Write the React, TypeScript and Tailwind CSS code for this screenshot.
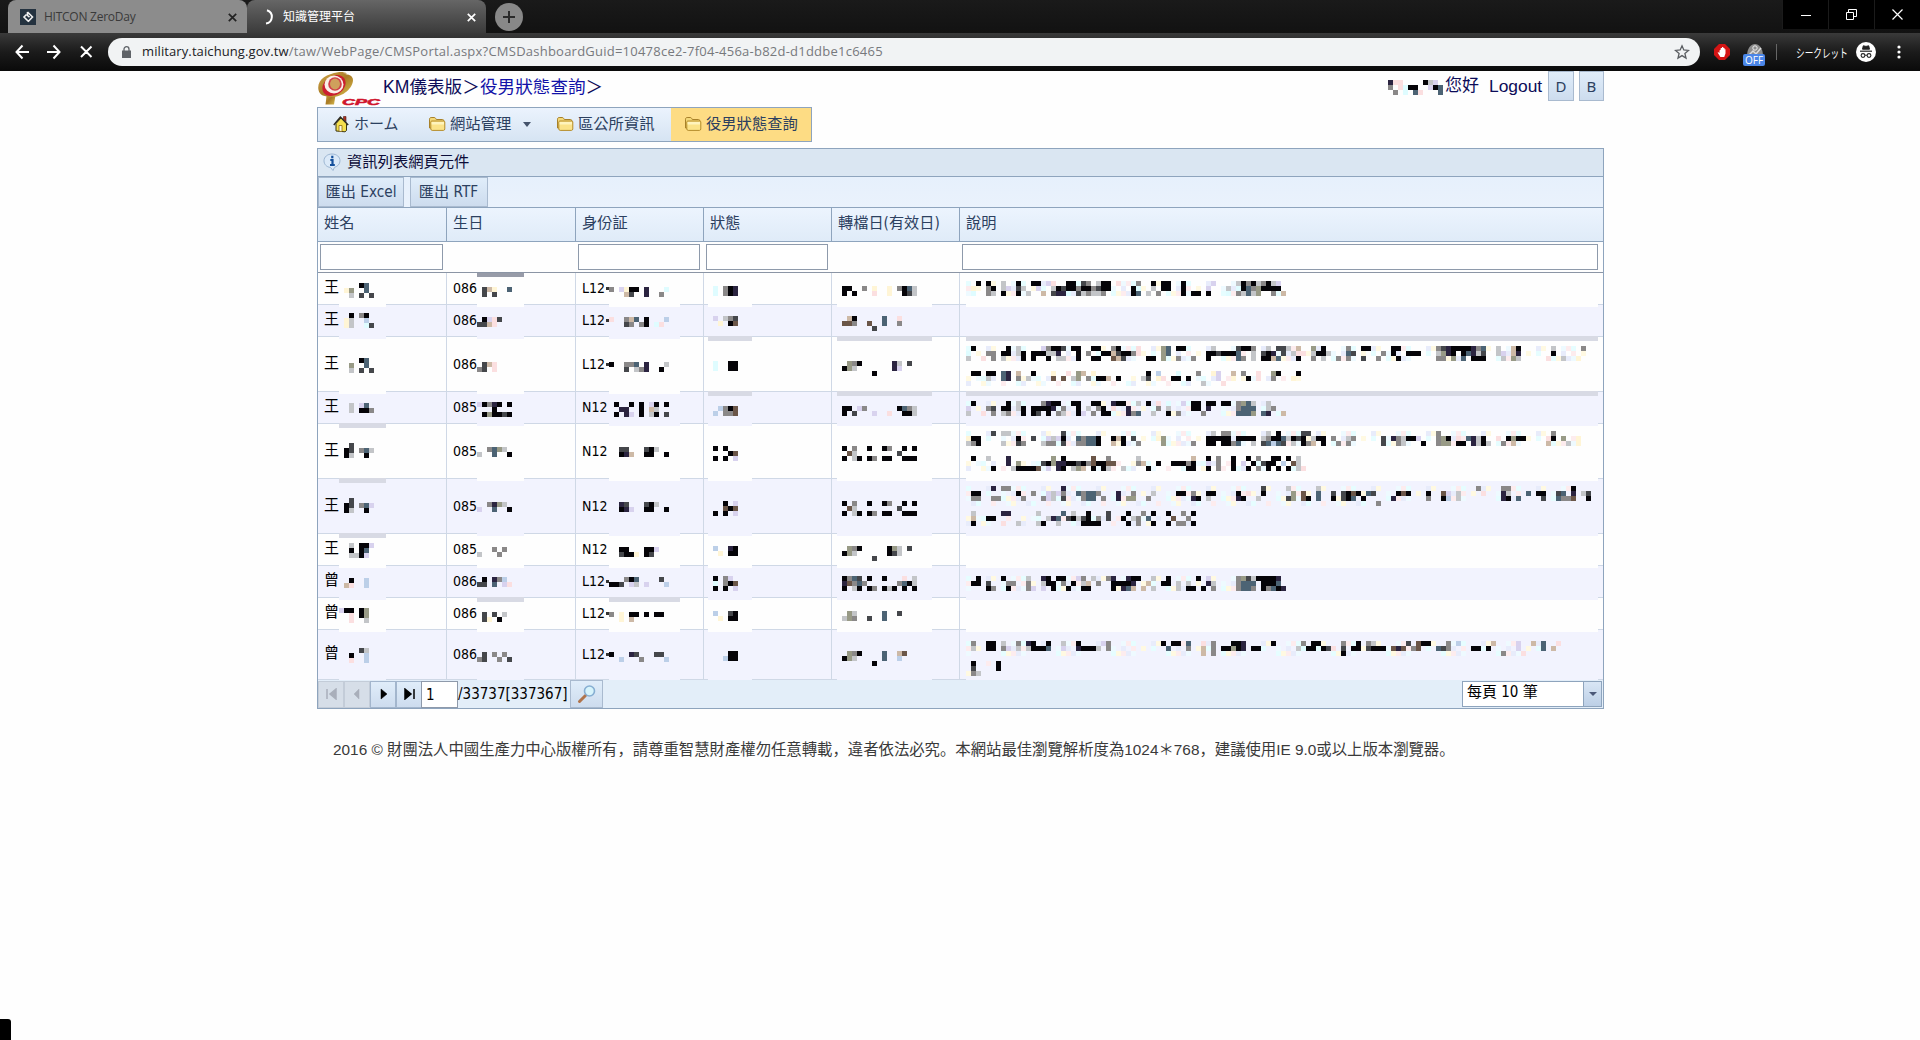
import type { ReactNode } from "react";
import clsx from "clsx";

const PALETTE: Record<string, string> = {
  k: "#050408",
  d: "#45474b",
  g: "#8a8888",
  s: "#c3c5c8",
  b: "#4c6374",
  n: "#2b2440",
  t: "#cdb9a6",
  r: "#6b5648",
  G: "#989a86",
  w: "#bccfe8",
  c: "#dffcff",
  y: "#fff5d6",
  p: "#fbdfe0",
  l: "#d8d2ee",
};

const TINTS = ["#e6fdff", "#fff9e2", "#fdecee", "#e8ecfb", "#eefaff"];

// Faint colour noise for the blank blocks between letters
function tint(x: number, y: number) {
  const n = (x * 31 + y * 57 + x * y * 7) % 11;
  return n < TINTS.length ? TINTS[n] : undefined;
}

// Censored text: every character is one 5px block
function Mosaic({ rows, className, noise }: { rows: string[]; className?: string; noise?: boolean }) {
  const width = Math.max(...rows.map((r) => r.length)) * 5;
  const height = rows.length * 5;
  return (
    <svg width={width} height={height} className={className} shapeRendering="crispEdges">
      {rows.flatMap((row, y) =>
        [...row].map((ch, x) => {
          const fill = PALETTE[ch] ?? (noise ? tint(x, y) : undefined);
          return fill ? <rect key={`${x}-${y}`} x={x * 5} y={y * 5} width={5} height={5} fill={fill} /> : null;
        }),
      )}
    </svg>
  );
}

interface Censored {
  top: number;
  rows: string[];
  strip?: boolean;
}

interface Row {
  height: string;
  name: string;
  birth: string;
  id: string;
  cells: [Censored, Censored, Censored, Censored, Censored, Censored];
}

const NONE: Censored = { top: 0, rows: [""] };
const H32 = "h-[32px]";
const H55 = "h-[55px]";
const H50 = "h-[50px]";

const ROWS: Row[] = [
  {
    height: H32,
    name: "王",
    birth: "086",
    id: "L12",
    cells: [
      { top: 10, rows: ["....kb.", ".yG..b.", "..s.d.d"] },
      { top: 14, rows: [".dty..b", ".d.d..."], strip: true },
      { top: 14, rows: ["g.lykk.n...c", "...td..n..g."] },
      { top: 13, rows: [".c.gkn", ".c.gkn"] },
      { top: 13, rows: [".kk..g.y..y.gkbs", ".k.k...p..y..kds"] },
      {
        top: 8,
        rows: [
          "..k.k..s..k..kk.lp..kk.dg.skk.p...g..k.kk..k.....l....skgksgksl.",
          ".y..gk.sl.ds..l..skdkkgkkgdkk....kc..s.kk..k....l...s.ckbgGkkkk.",
          ".c..gs.k..k.s..t.dnnc.dsgssg.....kb.s.g....k.kk.k...c.gsbsG..g.t",
        ],
      },
    ],
  },
  {
    height: H32,
    name: "王",
    birth: "086",
    id: "L12",
    cells: [
      { top: 8, rows: ["..k.gk.", ".ys..w.", ".ys..cd"] },
      { top: 12, rows: [".klpd..", "ddtp..."] },
      { top: 12, rows: ["p..gtb.k...w", "...dg.gk.cp."] },
      { top: 11, rows: [".l.sgd", "..y.kr"] },
      { top: 11, rows: ["..tk.....b..p...", ".rrg..r..b..g...", ".......d........"] },
      NONE,
    ],
  },
  {
    height: H55,
    name: "王",
    birth: "086",
    id: "L12",
    cells: [
      { top: 21, rows: ["....kb.", "..G..b.", "..s.d.d"] },
      { top: 25, rows: [".dtp...", "gd.p..."] },
      { top: 25, rows: ["k..ggb.n...s", "...d.sgn..k."] },
      { top: 24, rows: [".c..kk", ".c..kk"], strip: true },
      { top: 24, rows: ["..Ggk......ns.d.", ".kGs.......nl...", ".......k........"], strip: true },
      {
        top: 9,
        strip: true,
        rows: [
          ".k......k.s....lgkkd.kk..kk..gk...p....Gb.kk.....s....dkkg..s.dds.t..G.k....g..kk....kk.......gdnkkkkngb..s..tk......s.....g",
          "c...gg.kk.sk.kkkssn...k.g..kktdkkgp....Gb.......kkdkkkb..s.dkn.d.spp.skks...bd.....g.k..kkk...sGnk.kbnsd..sl.tn......k......",
          "s..p.g.s...k.k..k.ss..k..kk..rtd....kk.G..g..g..k.....bg.s.kktb...k..g.s..g.g..d..g...k.......gg.G.b.kkk...s.Gs.....p..s..y.",
          "",
          "",
          ".kk.kk.bn.t..k...y..p.Gt.y..........k.w...c...g..yl..t.g..p..Gk...k",
          "....s..bn.g.s....r.r.sG.g.kkt.k....sd.yp.kk.k.....l..y..k.p..g...y.",
          "...............................................s...p",
        ],
      },
    ],
  },
  {
    height: H32,
    name: "王",
    birth: "085",
    id: "N12",
    cells: [
      { top: 11, rows: ["..s.lb.", "..s.kkg"] },
      { top: 10, rows: ["lkgnk.k", "...k...", ".kGkkdk"] },
      { top: 10, rows: [".k..k.k.lk.k", "..nn..k.ts..", ".k.nl.k.sk.d"] },
      { top: 14, rows: ["..wgkr", ".w.ggr"], strip: true },
      { top: 14, rows: [".kk.lg......kbgs", ".k.d...l..p..kks"], strip: true },
      {
        top: 9,
        strip: true,
        rows: [
          ".k......k.s....gnkk..kk..kk..nkk..s.k.p.c..l.kk.kk.kk.gGbs..s.",
          "l...gd.kk.sk.kkkkn.g..k.s.gk.p..n.....g.s....kk.n.....gbbb..sg",
          "s..p.g.sg..k.kd.k.gs..kl.g.kk...ngb..s..k.g....g......bbbG.bn..t",
        ],
      },
    ],
  },
  {
    height: H55,
    name: "王",
    birth: "085",
    id: "N12",
    cells: [
      { top: 19, rows: ["..d....", ".kd.gbs", ".ks..k."], strip: true },
      { top: 23, rows: ["..gbGs.", "s..b..k"] },
      { top: 23, rows: ["..dd...dks..", "..knt..kk..k"] },
      { top: 22, rows: [".k.k..", "....kr", ".k.k.l"] },
      { top: 22, rows: [".k.g..k..kg..k.k", "..rs........d...", ".k.sk.kg.kk..kkk"] },
      {
        top: 7,
        rows: [
          ".....d.ss..........d.............................s.gg.......s.k....dd.........................g......................g",
          "ykk.......k..d..lslk..bgbbk..ktk.d....yG........kkkkk.kkkk.sgkkbskdk.skk.g..sg.....d.ngskkl...gGk.p.bnsk..p.kGkk....pk.G..y",
          "sgk....s..dg...sgg.d..ggbbk..t.k..g....G.....g..kk.kkgb..s.dbwbd.s.kgt.k..g.g......d..gs...k..gGG.kk.nsks..g.t......t...s.y",
          "",
          "",
          ".k..s...n........G.k.....r..g.....s..........t..k.g..k..k.g..kk.k.s",
          "........n.G....dkGnnkkdkgrkkrr....gt..k..kkkgk..l.g..k.l.k.dkk.w.rs",
          ".....k...skkkkr.l.nk.sGt.k.ks..s....k.......kk..k.g..k..k.g.k.k.k.sp",
        ],
      },
    ],
  },
  {
    height: H55,
    name: "王",
    birth: "085",
    id: "N12",
    cells: [
      { top: 19, rows: ["..d....", ".kd.gbl", ".ks..k."], strip: true },
      { top: 23, rows: ["..gnGs.", "l..b..k"] },
      { top: 23, rows: ["..nd...dks..", "..knl..kk..k"] },
      { top: 22, rows: ["...k.l", "...rkr", ".k.k.l"] },
      { top: 22, rows: [".k.g..k..kg..k.k", "..rs........d...", ".k.sk.kg.kk..kkk"] },
      {
        top: 7,
        rows: [
          ".....n.gg..........n.......................................d....s.....s...............................g....gg............k",
          ".kk.......k..g..lslg..bgbbg...n..g...s....kk.g..kk....k.p..k.....G.r..b..d.dkrk.bd....krk...k..rl.s....p...ns...b.kk..db.n.sd",
          ".gg..gg....g...gls.d...gbb.g..n.GG..g........nk.s.....nk..s.....dG.rk.b..k.dkb.k.....n......g..kw.s........nk.b....d..bggr..k",
          "..................................................................................g",
          "",
          ".s.....nn.....s....b.s..k...d...k..g.k..k..g.k",
          ".t..kk..........snb.dksdk.g.d..k.sg.b....r..g.",
          ".k.....p..s...sk..s....kkkk.....k.g..k..k.gg.k",
        ],
      },
    ],
  },
  {
    height: H32,
    name: "王",
    birth: "085",
    id: "N12",
    cells: [
      { top: 9, rows: ["..s.kkl", "..k.kb.", "..sskl."], strip: true },
      { top: 13, rows: ["...g.g.", "s...g.."] },
      { top: 13, rows: ["..kk...kkl..", "..dkky.kd..."] },
      { top: 12, rows: [".w..nk", "..y.kk"] },
      { top: 12, rows: ["..Ggk.....kGs.d.", ".kGs......kds...", ".......d........"] },
      NONE,
    ],
  },
  {
    height: H32,
    name: "曾",
    birth: "086",
    id: "L12",
    cells: [
      { top: 12, rows: ["..k..w.", ".tp..w."] },
      { top: 11, rows: [".k.ngw.", "dd.b.lp"] },
      { top: 11, rows: ["...gkb....d.", "kkd.ls.l...w"] },
      { top: 10, rows: [".k.gl.", ".c.gkr", ".k.k.l"] },
      { top: 10, rows: [".kgbd.k..k...p.s", ".nrgbg......gbks", ".k.sk.kg.ksk.k.k"] },
      {
        top: 10,
        rows: [
          "..k....k....s..nk.kk..lg.s..gn..nkk..s..k.....k.l.....gGdskkkkn",
          ".kk.d...gg..g..skk.g.k.st.g..kkkkn..t..kk.s.s...ns....gbbb.kkkb",
          "....kg..k...gl.l.k..k..kk....k.nbt.t.s....s.kk.k.g....gbbg.kgbkn",
        ],
      },
    ],
  },
  {
    height: H32,
    name: "曾",
    birth: "086",
    id: "L12",
    cells: [
      { top: 10, rows: ["lkk.kG.", "..p.kG.", "..p..s."] },
      { top: 14, rows: [".d.d.s.", ".dy.k.."], strip: true },
      { top: 14, rows: ["g.y.kk.k.kk.", "..y.t......."], strip: true },
      { top: 13, rows: [".w..dk", "..y.kk"] },
      { top: 13, rows: ["..Gs.....b..d...", ".sGg..d..b......"] },
      NONE,
    ],
  },
  {
    height: H50,
    name: "曾",
    birth: "086",
    id: "L12",
    cells: [
      { top: 18, rows: ["....ds.", "..k..w.", "..p..w."] },
      { top: 22, rows: [".d.g.g.", "gd..g.d"] },
      { top: 22, rows: ["k...nd...dd.", "..w...g....w"] },
      { top: 21, rows: ["....kk", "...wkk"] },
      { top: 21, rows: ["..Ggk....b..tr..", ".kGs.....b..w...", ".......k........"] },
      {
        top: 11,
        rows: [
          ".g..kk.s..g.nk..k..s..k....lg..........k.kk.b..p.g...kkn.....k.....g.kk....g..k.gs......d.rkk...g.w......t....l..t.b..p",
          ".s..kk.gl.s.skkkb..l..nkkks.g...........b...g..t.g.kkGkn.kk.......sckk.kdp.d.kk.dkkk.rnr.gr...bdg....kk.k.....l....b.t",
          "...............................................t.g.........................k...............................g...p",
          "",
          ".k....k",
          ".d....k",
          ".gs",
        ],
      },
    ],
  },
];

// Blanked area of each column
const PATCHES = [
  "left-[21px] w-[47px]",
  "left-[30px] w-[47px]",
  "left-[33px] w-[71px]",
  "left-[4px] w-[44px]",
  "left-[5px] w-[95px]",
  "left-[6px] right-[5px]",
];

const GRID = "grid grid-cols-[129px_129px_128px_128px_128px_1fr]";

function Patch({ data, index, alt }: { data: Censored; index: number; alt: boolean }) {
  return (
    <div
      className={clsx(
        "absolute top-1 -bottom-[3px] z-10 overflow-hidden",
        PATCHES[index],
        alt ? "bg-[#f2f3fe]" : "bg-[#fefefe]",
      )}
    >
      <div className="relative" style={{ top: data.top - 4 }}>
        <Mosaic rows={data.rows} noise={index === 5} className="block" />
      </div>
    </div>
  );
}

function GridRow({ row, index }: { row: Row; index: number }) {
  const alt = index % 2 === 1;
  const texts = [row.name, row.birth, row.id, "", "", ""];
  return (
    <div className={clsx(GRID, row.height, alt ? "bg-[#f2f3fe]" : "bg-[#fefefe]")}>
      {row.cells.map((cell, i) => (
        <div
          key={i}
          className={clsx(
            "relative flex items-center border-b border-[#cfd8e6] pl-[6px] text-black",
            i < 5 && "border-r",
            i === 0 ? "pb-[2px] text-[15px]" : "text-[14px]",
          )}
        >
          <span className="whitespace-nowrap">{texts[i]}</span>
          {row.id === "L12" && i === 2 && <span className="ml-[1px] h-[3px] w-[3px] bg-[#333]" />}
          <Patch data={cell} index={i} alt={alt} />
          {cell.strip && (
            <div
              className={clsx(
                "absolute z-20",
                index === 0 ? "top-0 h-1 bg-[#979ba8]" : "-top-px h-[5px] bg-[#d8dae4]",
                PATCHES[i],
              )}
            />
          )}
        </div>
      ))}
    </div>
  );
}

function Folder() {
  return (
    <svg width="18" height="16" viewBox="0 0 18 16" className="mb-px shrink-0">
      <path d="M1.500 12V3.200c0-1 .6-1.700 1.600-1.700h3.200c.6 0 1 .3 1.300.8l.7 1.200h6.200c.8 0 1.300.5 1.300 1.300V12z" fill="#f3d878" stroke="#a8812a" />
      <path d="M2.800 6c0-.5.4-1 1-1h12c.6 0 1 .4 1 1v7c0 .8-.6 1.400-1.400 1.400H4.200c-.8 0-1.400-.6-1.400-1.400z" fill="#fbe389" stroke="#b48c2c" />
      <path d="M3.600 6h12.400v2.500H3.600z" fill="#fff4bd" />
    </svg>
  );
}

function House() {
  return (
    <svg width="16" height="18" viewBox="0 0 16 18" className="mb-px shrink-0">
      <path d="M10.500 1.500h2.500v5l-2.500-2.500z" fill="#b03020" stroke="#4a1a10" strokeWidth=".6" />
      <path d="M3 8.500v7.500l9 .8 1.500-1.300V8L8 3z" fill="#f5e04e" stroke="#3a3514" />
      <path d="M.8 10 7.400 2l7.800 8" fill="none" stroke="#2d2a20" strokeWidth="1.500" />
      <path d="M6 10.500h3v6l-3-.2z" fill="#fffbe0" stroke="#8a6a10" strokeWidth=".8" />
    </svg>
  );
}

function Logo() {
  return (
    <svg width="65" height="35" viewBox="0 0 65 35">
      <defs>
        <linearGradient id="gold" x1="0" x2="1" y1="0" y2="1">
          <stop offset="0" stopColor="#d2a84a" />
          <stop offset=".5" stopColor="#a87a24" />
          <stop offset="1" stopColor="#dcc050" />
        </linearGradient>
      </defs>
      <path d="M10 21h9l-2 12.500H8.500z" fill="url(#gold)" />
      <path d="M1.500 19C-.5 9 9 3 21 1.200c4-.4 7 .2 9 1.300l-4 .6c6 0 10 2 10 6C36 17 26 26 16 26 7 26 2.500 24 1.500 19z" fill="url(#gold)" />
      <ellipse cx="17" cy="14.500" rx="12.500" ry="9.500" fill="#cc1f2e" transform="rotate(-35 17 14.500)" />
      <ellipse cx="17" cy="13.500" rx="9.500" ry="9" fill="#faf0e8" />
      <ellipse cx="18" cy="13" rx="6.800" ry="6.800" fill="#d0404a" />
      <ellipse cx="18" cy="13" rx="5" ry="5.400" fill="#cfa05c" />
      <text
        x="25"
        y="33.500"
        textLength="38"
        lengthAdjust="spacingAndGlyphs"
        fontFamily="Liberation Sans"
        fontSize="8.500"
        fontWeight="700"
        fontStyle="italic"
        fill="#d0142c"
        stroke="#d0142c"
        strokeWidth=".5"
      >
        CPC
      </text>
    </svg>
  );
}

function TabClose({ className }: { className: string }) {
  return (
    <svg width="9" height="9" viewBox="0 0 9 9" className={className}>
      <path d="M.8.8l7.400 7.400M8.200.8.8 8.200" stroke="currentColor" strokeWidth="1.700" />
    </svg>
  );
}

function TabStrip() {
  return (
    <div className="flex h-[33px] bg-gradient-to-b from-[#1a1a1a] to-[#121212] pl-2">
      <div className="flex h-full w-[239px] items-center rounded-t-lg bg-[#8c8c8c] pt-px pl-3 text-[#3a3a3a]">
        <svg width="16" height="16" viewBox="0 0 16 16">
          <path d="M0 0h16v16H0z" fill="#24323f" />
          <path d="M7.500 3 12.500 8l-4.500 4.800M7.500 3v3.500l2 1.700M8.500 12.500 4 8l2.500-2.500" fill="none" stroke="#f0f0f0" strokeWidth="1.600" />
        </svg>
        <span className="ml-2 text-[12px] leading-4 tracking-[-0.25px]">HITCON ZeroDay</span>
        <TabClose className="mr-[10px] ml-auto text-[#222]" />
      </div>
      <div className="flex h-full w-[239px] items-center rounded-t-lg bg-gradient-to-b from-[#666] to-[#3b3b3b] pt-px pl-[17px] text-white">
        <svg width="12" height="16" viewBox="0 0 12 16">
          <path d="M3 1.200A6.900 6.900 0 0 1 2 14.600" fill="none" stroke="#fff" strokeWidth="2" />
        </svg>
        <span className="ml-[7px] text-[12px] leading-4">知識管理平台</span>
        <TabClose className="mr-[10px] ml-auto" />
      </div>
      <div className="mt-[3px] ml-[9px] flex h-7 w-7 items-center justify-center rounded-full bg-[#888]">
        <svg width="12" height="12" viewBox="0 0 12 12">
          <path d="M6 0v12M0 6h12" stroke="#2a2a2a" strokeWidth="2" />
        </svg>
      </div>
      <div className="ml-auto flex h-[29px] gap-px bg-[#1b1b1b] pl-px">
        <div className="flex w-[45px] items-center justify-center bg-black">
          <svg width="10" height="10"><path d="M0 5.500h10" stroke="#fff" /></svg>
        </div>
        <div className="flex w-[45px] items-center justify-center bg-black">
          <svg width="11" height="11" fill="none" stroke="#fff">
            <path d="M.5 3.500h7v7h-7zM2.500 3V.5h8v7H8" />
          </svg>
        </div>
        <div className="flex w-[45px] items-center justify-center bg-black">
          <svg width="11" height="11"><path d="M.5.5l10 10M10.500.5l-10 10" stroke="#fff" strokeWidth="1.200" /></svg>
        </div>
      </div>
    </div>
  );
}

function Toolbar() {
  return (
    <div className="flex h-[38px] items-center bg-gradient-to-b from-[#3a3a3a] via-[#1b1b1b] to-[#0a0a0a] pl-[15px] text-white">
      <svg width="78" height="16" viewBox="0 0 78 16" fill="none" stroke="#fff" strokeWidth="2">
        <path d="M14 8H1.500M7.500 1.500 1.500 8l6 6.500M32 8h12.500M38.500 1.500l6 6.500-6 6.500M66 2.500 76.500 13M76.500 2.500 66 13" />
      </svg>
      <div className="ml-[15px] flex h-7 w-[1592px] items-center rounded-full bg-[#f1f3f4] pr-[10px] pl-[14px]">
        <svg width="9" height="12" viewBox="0 0 9 12">
          <path d="M0 4.500h9V12H0z" fill="#5f6368" />
          <path d="M2 5V3.200a2.500 2.500 0 0 1 5 0V5" fill="none" stroke="#5f6368" strokeWidth="1.300" />
        </svg>
        <span className="ml-[11px] text-[13px] tracking-[0.235px] whitespace-nowrap text-[#77797d]">
          <span className="tracking-[0.1px] text-[#202124]">military.taichung.gov.tw</span>
          /taw/WebPage/CMSPortal.aspx?CMSDashboardGuid=10478ce2-7f04-456a-b82d-d1ddbe1c6465
        </span>
        <svg width="16" height="16" viewBox="0 0 16 16" className="ml-auto">
          <path d="M8 1.800 9.800 6l4.700.4-3.600 3.100 1.100 4.600L8 11.600l-4 2.500 1.100-4.600L1.500 6.400 6.200 6z" fill="none" stroke="#5a5d61" strokeWidth="1.300" />
        </svg>
      </div>
      <svg width="16" height="16" viewBox="0 0 16 16" className="ml-[14px]">
        <path d="M5 0h6l5 5v6l-5 5H5l-5-5V5z" fill="#d41414" />
        <path d="M5.500 6.500V9l-1.200-.8c-.6 0-.8.4-.4.9L6.400 13h3.800l1.300-3.500V5.200h-1V4h-1.200V3H8v1H6.700v1.500z" fill="#fff" />
      </svg>
      <div className="relative ml-[13px] h-7 w-[22px]">
        <svg width="16" height="14" viewBox="0 0 16 14" className="mt-[6px] ml-1">
          <path d="M0 12C0 4 4 0 8 0s8 4 8 12z" fill="#8c8c8c" />
          <path d="M2 11 6 7l3 3 5-6" fill="none" stroke="#ddd" strokeWidth="1.500" />
          <circle cx="8" cy="4" r="2.200" fill="none" stroke="#eee" />
        </svg>
        <span className="absolute bottom-0 left-0 h-3 w-[22px] rounded-[2px] bg-[#4a86e8] text-center text-[10px] leading-3">
          OFF
        </span>
      </div>
      <div className="ml-[11px] h-4 w-px bg-[#666]" />
      <span className="ml-[19px] w-[52px] whitespace-nowrap">
        <span className="inline-block origin-left scale-x-[0.72] text-[12px]">シークレット</span>
      </span>
      <svg width="20" height="20" viewBox="0 0 20 20" className="ml-2">
        <circle cx="10" cy="10" r="10" fill="#fff" />
        <path d="M4 9.200h12" stroke="#222" strokeWidth="1.200" />
        <path d="M7.300 3.800 10 4.400l2.700-.6.8 3.400h-7z" fill="#222" stroke="#222" />
        <circle cx="7" cy="13.500" r="1.900" fill="none" stroke="#222" strokeWidth="1.100" />
        <circle cx="13" cy="13.500" r="1.900" fill="none" stroke="#222" strokeWidth="1.100" />
        <path d="M9 13.200h2" stroke="#222" />
      </svg>
      <svg width="4" height="14" viewBox="0 0 4 14" className="ml-[21px]" fill="#fff">
        <circle cx="2" cy="2" r="1.600" />
        <circle cx="2" cy="7" r="1.600" />
        <circle cx="2" cy="12" r="1.600" />
      </svg>
    </div>
  );
}

function Button({ className, children }: { className: string; children?: ReactNode }) {
  return (
    <div
      className={clsx(
        "flex items-center justify-center border border-[#a9bacf] bg-gradient-to-b from-[#e0edfa] to-[#cddcee] whitespace-nowrap text-[#2c4060]",
        className,
      )}
    >
      {children}
    </div>
  );
}

const HEADERS = ["姓名", "生日", "身份証", "狀態", "轉檔日(有效日)", "說明"];

function DataGrid() {
  return (
    <div className="mt-[6px] h-[561px] w-[1287px] border border-[#8ea4bd] text-[15.200px]">
      <div className="flex h-7 items-center border-b border-[#8ea4bd] bg-[#dae6f2] pb-px pl-[5px] text-[#0c0c38]">
        <svg width="18" height="18" viewBox="0 0 18 18">
          <path d="M9 1c4.500 0 8 2.800 8 6.800 0 3.300-2.500 5.800-5.500 6.500L10 17.500l-2.500-3C3.500 14 1 11.300 1 7.800 1 3.800 4.500 1 9 1z" fill="#dbe9f8" stroke="#9db6d2" />
          <path d="M9.300 2.800v2.400M7.300 7h2.200v5M7 12h4.800" fill="none" stroke="#14509c" strokeWidth="2.200" />
        </svg>
        <span className="ml-[6px] text-[15.300px]">資訊列表網頁元件</span>
      </div>
      <div className="flex h-[31px] gap-[6px] border-b border-[#8ea4bd] bg-gradient-to-b from-[#e6f0fc] to-[#eaf2fc]">
        <Button className="h-[30px] w-[86px]">匯出 Excel</Button>
        <Button className="h-[30px] w-[78px] pr-px">匯出 RTF</Button>
      </div>
      <div className={clsx(GRID, "h-[34px] bg-gradient-to-b from-[#ecf4fe] to-[#dfebf8]")}>
        {HEADERS.map((h, i) => (
          <div
            key={h}
            className={clsx(
              "flex items-center border-b border-[#8ea4bd] pb-[2px] pl-[6px] whitespace-nowrap text-[#2c4060]",
              i < 5 && "border-r",
            )}
          >
            {h}
          </div>
        ))}
      </div>
      <div className={clsx(GRID, "h-[31px] border-b border-[#8b95a5] bg-[#fefefe]")}>
        {HEADERS.map((h, i) => (
          <div key={h} className={clsx("pt-[2px] pl-[2px]", i === 5 ? "pr-[5px]" : "pr-[4px]")}>
            {i !== 1 && i !== 4 && <div className="h-[26px] border border-[#8e9aab] bg-white" />}
          </div>
        ))}
      </div>
      {ROWS.map((row, i) => (
        <GridRow key={i} row={row} index={i} />
      ))}
      <div className="relative z-20 flex h-7 items-center bg-[#e3eef9] text-black">
        <Pager disabled d="M1 1v10M10 1 4 6l6 5z" />
        <Pager disabled d="M7 1 2 6l5 5z" />
        <Pager d="M3 1l6 5-6 5z" />
        <Pager d="M1 1l6 5-6 5zM10 1v10" />
        <div className="-ml-px h-[27px] w-[37px] border border-[#8e9aab] bg-white pl-1 text-[15px] leading-[27px]">1</div>
        <span className="w-[112px] text-[15px] whitespace-nowrap">/33737[337367]</span>
        <Button className="h-7 w-[33px]">
          <svg width="20" height="20" viewBox="0 0 20 20">
            <path d="M2.500 17.500l6-6" stroke="#b0744c" strokeWidth="3" strokeLinecap="round" />
            <circle cx="12.500" cy="7" r="5" fill="#d6f3fb" stroke="#86aed2" strokeWidth="1.600" />
          </svg>
        </Button>
        <div className="mr-px ml-auto flex h-[26px] w-[140px] border border-[#8ea4bd] bg-white">
          <span className="flex-1 pl-1 text-[15px] leading-[21px]">每頁 10 筆</span>
          <div className="flex w-[18px] items-center justify-center border-l border-[#8ea4bd] bg-gradient-to-b from-[#d9e6f5] to-[#bccfe6]">
            <svg width="8" height="4"><path d="M0 0h8L4 4z" fill="#4a5878" /></svg>
          </div>
        </div>
      </div>
    </div>
  );
}

function Pager({ d, disabled }: { d: string; disabled?: boolean }) {
  return (
    <div
      className={clsx(
        "flex h-[27px] w-[26px] items-center justify-center border",
        disabled
          ? "border-[#c3ccd8] bg-[#d6dee8] text-[#a9afba]"
          : "border-[#a3b6cd] bg-gradient-to-b from-[#e0edfa] to-[#cddcee] text-black",
      )}
    >
      <svg width="11" height="12" viewBox="0 0 11 12" fill="currentColor" stroke="currentColor">
        <path d={d} strokeWidth={d.includes("v10") ? 1.5 : 0.5} />
      </svg>
    </div>
  );
}

export default function App() {
  return (
    <div className="relative h-[1040px] w-[1920px] overflow-hidden bg-[#fefefe] font-['DejaVu_Sans_Condensed','Noto_Sans_CJK_TC',sans-serif]">
      <div className="font-['Open_Sans','Noto_Sans_CJK_TC',sans-serif]">
        <TabStrip />
        <Toolbar />
      </div>
      <div className="ml-[317px] w-[1287px]">
        <div className="flex h-9 font-['Liberation_Sans','Noto_Sans_CJK_TC',sans-serif] text-[17.600px] text-[#0c0c58]">
          <Logo />
          <div className="ml-px flex h-[32px] items-center whitespace-nowrap">
            <span className="w-[97px]">KM儀表版＞</span>
            <span className="text-[#1212a8]">
              役男狀態查詢<span className="text-[#0c0c58]">＞</span>
            </span>
          </div>
          <div className="ml-auto flex h-[30px]">
            <Mosaic rows={["npp....ksl.", "g.pckk..lkb", ".g.c.bp...b"]} className="mt-[9px] mr-[2px]" />
            <span className="flex w-[44px] items-center pb-px text-[17px]">您好</span>
            <span className="flex w-[59px] items-center text-[17.400px]">Logout</span>
            <Button className="h-[30px] w-[26px] font-['Noto_Sans'] text-[15px]">D</Button>
            <Button className="ml-[5px] h-[30px] w-[25px] font-['Noto_Sans'] text-[15px]">B</Button>
          </div>
        </div>
        <div className="flex h-[35px] w-[495px] border border-[#8ea4bd] bg-gradient-to-b from-[#ebf3fd] to-[#d6e4f3] text-[15.300px] whitespace-nowrap text-[#2c4060]">
          <div className="flex w-[110px] items-center pl-[15px]">
            <House />
            <span className="ml-[5px] text-[15px]">ホーム</span>
          </div>
          <div className="flex w-[128px] items-center">
            <Folder />
            <span className="ml-[4px]">網站管理</span>
            <svg width="8" height="5" className="ml-[12px]"><path d="M0 0h8L4 5z" fill="#44536b" /></svg>
          </div>
          <div className="flex w-[115px] items-center">
            <Folder />
            <span className="ml-[4px]">區公所資訊</span>
          </div>
          <div className="flex flex-1 items-center bg-[#fddc84] pl-[13px]">
            <Folder />
            <span className="ml-[4px]">役男狀態查詢</span>
          </div>
        </div>
        <DataGrid />
        <p className="mt-[29px] ml-4 h-6 text-[15.360px] leading-6 whitespace-nowrap text-[#3a3a3a] font-['Liberation_Sans','Noto_Sans_CJK_JP',sans-serif]">
          2016 © 財團法人中國生產力中心版權所有，請尊重智慧財產權勿任意轉載，違者依法必究。本網站最佳瀏覽解析度為1024＊768，建議使用IE 9.0或以上版本瀏覽器。
        </p>
      </div>
      <div className="absolute bottom-0 left-0 h-[21px] w-[11px] rounded-tr-[3px] bg-black" />
    </div>
  );
}
